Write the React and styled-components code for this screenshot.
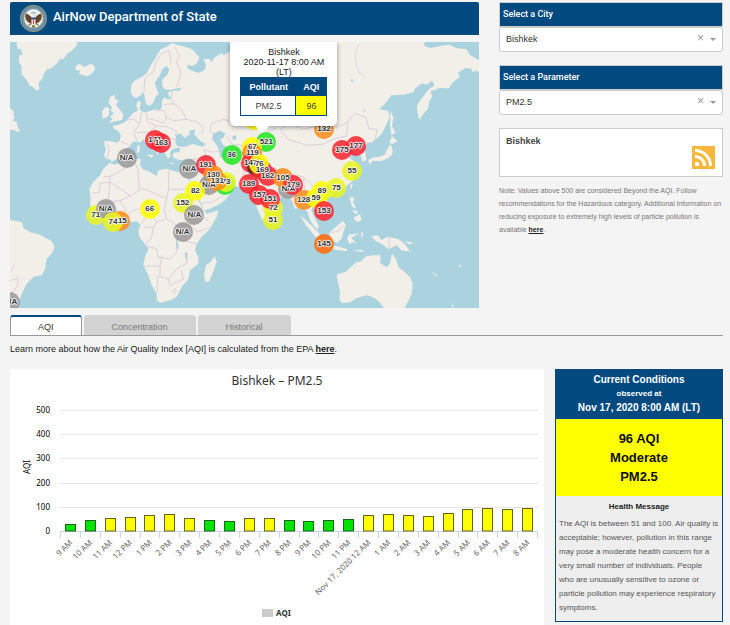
import React, { useState } from "react";
import styled, { createGlobalStyle } from "styled-components";

const NAVY = "#004a80";

const COLORS = {
  green: "#22e622",
  yellow: "#ffff00",
  lime: "#e8f520",
  orange: "#ff8c1a",
  deepOrange: "#ff6a0a",
  red: "#fc2430",
  grey: "#999999",
  dark: "#5a2a20",
};

// map drawing and pins share one 1407 x 798 coordinate space
const MAP_W = 1407;
const MAP_H = 798;

const land = [
  // Greenland, Iceland, Newfoundland
  "M20 0L22 20 33 22 38 38 28 40 26 60 35 72 34 95 50 115 60 132 70 136 80 146 88 141 86 122 98 108 100 98 112 80 120 82 140 65 150 50 160 52 172 35 184 27 202 8 200 0Z",
  "M196 75L205 66 216 70 222 76 240 66 250 68 256 80 248 92 232 103 216 98 206 96 212 86 198 84Z",
  "M0 200L10 206 13 228 8 236 20 240 24 258 31 266 24 270 12 264 0 264Z",
  // Eurasia
  "M500 8L486 3 470 14 452 22 442 38 430 58 418 78 410 94 395 105 376 115 365 125 362 150 368 163 378 168 392 160 400 150 404 165 408 185 418 192 430 182 436 165 446 155 440 140 434 122 448 102 458 80 470 72 478 82 472 98 458 112 456 128 462 140 478 144 495 140 514 137 510 146 490 146 474 151 478 165 488 170 472 172 462 166 456 178 456 195 450 204 435 202 420 207 405 211 394 208 388 198 394 182 384 176 379 190 384 206 370 212 360 224 350 236 338 244 326 248 308 252 312 260 324 266 332 278 330 295 322 302 300 298 284 297 283 310 288 320 282 340 288 350 298 352 306 360 316 352 330 352 342 340 344 325 358 314 366 302 378 297 390 302 400 292 412 304 422 314 432 322 442 336 447 338 443 326 450 330 448 320 432 310 424 298 417 286 424 282 436 294 452 306 460 318 466 335 474 350 482 342 480 330 488 322 498 318 512 318 508 330 490 333 488 345 500 352 515 355 530 350 546 350 550 358 545 375 540 388 532 396 545 425 560 455 575 490 582 505 600 500 625 488 645 475 660 455 670 445 662 435 645 430 638 420 630 430 618 422 610 405 600 395 612 398 625 412 645 425 665 430 700 437 712 450 722 455 735 475 742 500 755 530 762 540 770 530 772 510 785 490 805 470 820 462 835 465 845 475 855 500 864 498 870 478 878 500 892 508 900 534 910 550 924 564 926 550 912 524 904 504 910 490 925 512 936 524 958 506 962 490 950 474 945 459 970 449 1000 439 1025 419 1046 384 1036 360 1020 349 1012 336 1022 326 1040 329 1052 342 1058 359 1070 354 1066 332 1060 314 1074 302 1090 299 1116 274 1128 250 1140 224 1134 206 1108 202 1124 186 1145 160 1180 158 1212 150 1214 140 1236 124 1252 128 1262 118 1270 119 1272 132 1256 142 1230 176 1221 190 1222 209 1228 234 1236 222 1255 199 1257 180 1266 164 1262 148 1290 138 1316 139 1330 120 1350 104 1344 92 1366 78 1384 80 1388 90 1400 86 1407 90 1407 54 1380 40 1370 22 1340 19 1318 8 1290 12 1262 18 1243 12 1243 0 705 0 700 22 660 28 640 40 636 32 615 46 602 62 600 50 580 52 588 68 584 84 566 92 550 88 534 80 530 68 548 72 562 62 568 46 546 22 524 14Z",
  // Britain and Ireland
  "M300 165L316 158 314 172 326 174 318 188 330 204 340 218 336 234 318 238 296 242 308 230 300 224 312 214 302 206 306 196 296 184Z",
  "M286 194L298 198 296 222 278 230 276 208Z",
  // Africa and Madagascar
  "M300 362L315 368 340 355 380 350 393 352 390 368 398 382 420 390 440 402 446 384 470 380 500 390 525 388 534 400 536 412 550 436 560 465 575 495 590 515 625 505 620 525 600 560 575 585 560 605 555 625 565 645 565 665 540 685 535 712 515 735 500 765 480 775 450 782 440 775 440 755 425 730 415 700 400 670 405 645 415 620 400 600 388 585 385 565 392 550 380 538 365 540 345 525 320 530 290 535 270 525 250 510 240 490 242 470 238 440 250 420 270 400 280 380Z",
  "M614 642L620 660 610 688 598 718 586 720 582 700 588 670 602 660Z",
  // South America
  "M0 533L20 538 36 541 40 558 60 570 90 578 125 598 134 615 125 635 110 650 105 680 95 700 70 705 50 725 40 745 30 770 14 798 0 798Z",
  // Mediterranean islands
  "M382 312L390 308 388 330 380 334ZM410 338L430 338 426 348ZM474 362L492 363 488 367ZM524 362L536 358 530 368Z",
  // Japan, Sakhalin, Taiwan
  "M1148 324L1142 306 1132 322 1124 338 1108 344 1092 346 1074 354 1080 368 1088 356 1110 358 1132 350 1146 338ZM1138 302L1146 282 1162 298 1148 306ZM1142 204L1150 228 1146 252 1156 272 1144 280 1140 250ZM1020 430L1028 424 1024 444Z",
  // Philippines and Indonesia
  "M1018 466L1032 466 1030 482 1040 500 1026 494ZM1030 528L1050 516 1054 536 1040 540ZM1026 504L1044 508 1038 518ZM958 572L976 556 998 536 1008 548 1000 570 996 588 982 602 962 594ZM870 520L888 534 924 570 944 596 940 604 916 584 888 550ZM946 610L978 612 1012 622 1010 628 960 620ZM1016 578L1046 574 1024 588 1040 604 1028 600 1018 606 1012 592ZM1030 624L1062 624 1056 630ZM1052 568L1060 576 1056 590Z",
  "M1084 582L1104 580 1114 594 1134 584 1166 592 1184 606 1200 628 1176 626 1160 610 1136 622 1116 606 1098 598ZM1182 596L1208 602 1200 608Z",
  // Australia and Pacific islands
  "M980 702L984 696 1006 690 1022 676 1036 662 1054 658 1066 644 1086 640 1112 640 1110 662 1130 676 1140 664 1146 634 1158 652 1166 676 1184 690 1200 706 1208 724 1206 752 1194 780 1184 798 1122 798 1110 782 1094 768 1070 760 1040 768 1022 780 998 784 988 774 990 750Z",
  "M1268 690L1284 702 1282 704 1268 694ZM1344 670L1356 668 1350 676ZM1320 782L1334 794 1328 796Z",
];

const water = [
  "M496 302L498 280 512 274 524 288 540 276 536 268 556 262 552 276 572 298 588 306 578 314 548 306 520 316 502 312Z",
  "M610 276L628 266 646 274 640 288 630 292 640 310 652 316 658 342 644 352 630 344 628 326 618 306 606 292Z",
  "M666 284L676 278 680 292 670 294Z",
  "M498 594L504 600 506 622 500 618ZM524 628L530 634 532 652 526 648ZM516 566L526 562 526 574 516 576Z",
  "M1026 110L1030 124 1022 116ZM1058 204L1066 202 1064 210Z",
];

const river = "M1046 6L1036 34 1038 70 1048 92 1064 104";

const borders =
  "M402 150L404 110 430 90 438 60 454 34 478 26 M478 26L484 70 M494 14L508 40 500 60 512 90 508 112 500 136 M486 148L484 172 492 186 M460 188L480 186 492 186 M432 204L462 206 470 226 462 244 440 236 M440 236L410 228 M394 210L390 244 M390 244L370 232 352 234 M408 212L412 240 440 252 470 254 500 268 M390 244L372 270 380 296 M470 226L490 236 530 232 M492 186L512 200 530 232 560 240 580 256 576 276 M500 268L496 282 M440 252L420 270 380 272 M430 280L450 276 480 290 496 292 M462 300L488 312 M332 298L356 308 M292 306L298 320 292 348 M604 244L640 232 668 240 M604 244L600 268 612 276 M580 322L606 330 630 328 M582 324L590 348 548 352 M590 348L606 384 M650 352L688 350 700 390 696 436 M652 284L664 306 700 310 M608 398L560 372 548 380 M608 480L640 460 M572 484L606 480 M340 358L344 380 300 404 280 404 M300 404L300 420 362 462 388 444 M388 444L384 380 376 366 M388 444L400 440 470 470 M476 384L476 442 556 442 M476 442L470 470 462 506 470 530 M300 420L270 424 268 452 246 454 M300 420L294 480 262 480 M294 480L330 476 362 462 M330 476L350 510 M362 508L352 530 M388 500L366 506 M300 498L300 530 M320 500L322 528 M392 548L412 520 440 516 M416 470L424 516 440 540 470 530 M470 530L500 550 540 550 540 524 M400 556L430 556 440 540 M430 556L424 590 406 606 M500 550L500 590 560 606 M406 612L440 620 444 646 480 650 500 630 500 590 M402 672L450 672 456 640 M450 672L450 704 442 704 442 752 M450 704L476 712 500 680 530 664 532 632 M476 712L480 732 500 720 520 712 514 684 M540 550L562 570 600 556 M572 520L596 536 M488 748L494 740 500 748 492 754Z M810 262L840 246 880 262 920 252 960 262 996 250 1014 240 M810 262L834 292 890 310 940 306 980 288 1010 282 1014 240 M1014 240L1034 214 1068 226 1076 260 1102 262 1096 290 1084 308 M640 232L670 244 M774 268L800 258 M790 376L830 396 880 404 900 424 M700 390L740 380 780 400 M880 404L884 440 900 462 M900 424L920 442 946 450 M14 668L0 690 M0 716L22 708 24 730 4 756 M962 572L984 568 1000 550 M1136 584L1138 622 M738 300L770 320 M690 330L730 346";

const pins = [
  { x: 733, y: 235, label: "", color: "yellow" },
  { x: 435, y: 293, label: "171", color: "red" },
  { x: 454, y: 303, label: "163", color: "red" },
  { x: 350, y: 348, label: "N/A", color: "grey" },
  { x: 665, y: 338, label: "36", color: "green" },
  { x: 538, y: 380, label: "N/A", color: "grey" },
  { x: 587, y: 370, label: "191", color: "red" },
  { x: 610, y: 398, label: "130", color: "orange" },
  { x: 597, y: 430, label: "N/A", color: "grey" },
  { x: 645, y: 430, label: "", color: "green" },
  { x: 648, y: 421, label: "73", color: "lime" },
  { x: 622, y: 418, label: "131", color: "orange" },
  { x: 556, y: 446, label: "82", color: "yellow" },
  { x: 518, y: 482, label: "152", color: "lime" },
  { x: 553, y: 520, label: "N/A", color: "grey" },
  { x: 518, y: 569, label: "N/A", color: "grey" },
  { x: 419, y: 502, label: "66", color: "yellow" },
  { x: 257, y: 518, label: "71", color: "lime" },
  { x: 287, y: 500, label: "N/A", color: "grey" },
  { x: 331, y: 538, label: "115", color: "orange" },
  { x: 309, y: 541, label: "74", color: "lime" },
  { x: 1, y: 779, label: "N/A", color: "grey" },
  { x: 942, y: 262, label: "132", color: "orange" },
  { x: 996, y: 324, label: "175", color: "red" },
  { x: 1038, y: 311, label: "177", color: "red" },
  { x: 769, y: 299, label: "521", color: "green" },
  { x: 727, y: 315, label: "67", color: "yellow" },
  { x: 727, y: 334, label: "119", color: "orange" },
  { x: 722, y: 364, label: "147", color: "red" },
  { x: 740, y: 374, label: "", color: "dark" },
  { x: 757, y: 385, label: "169", color: "red" },
  { x: 748, y: 366, label: "76", color: "yellow" },
  { x: 773, y: 402, label: "162", color: "red" },
  { x: 835, y: 440, label: "N/A", color: "grey" },
  { x: 819, y: 407, label: "105", color: "orange" },
  { x: 850, y: 430, label: "179", color: "red" },
  { x: 716, y: 425, label: "189", color: "red" },
  { x: 789, y: 533, label: "51", color: "lime" },
  { x: 790, y: 497, label: "72", color: "lime" },
  { x: 780, y: 470, label: "151", color: "red" },
  { x: 748, y: 460, label: "157", color: "red" },
  { x: 881, y: 475, label: "128", color: "orange" },
  { x: 918, y: 468, label: "59", color: "yellow" },
  { x: 936, y: 448, label: "89", color: "yellow" },
  { x: 979, y: 437, label: "75", color: "lime" },
  { x: 1026, y: 387, label: "55", color: "lime" },
  { x: 942, y: 508, label: "153", color: "red" },
  { x: 942, y: 607, label: "145", color: "deepOrange" },
];

const readings = [
  ["9 AM", 28], ["10 AM", 47], ["11 AM", 53], ["12 PM", 57], ["1 PM", 66],
  ["2 PM", 70], ["3 PM", 53], ["4 PM", 45], ["5 PM", 41], ["6 PM", 53],
  ["7 PM", 53], ["8 PM", 47], ["9 PM", 41], ["10 PM", 45], ["11 PM", 49],
  ["Nov 17, 2020 12 AM", 65], ["1 AM", 72], ["2 AM", 66], ["3 AM", 64],
  ["4 AM", 73], ["5 AM", 89], ["6 AM", 94], ["7 AM", 91], ["8 AM", 96],
];

const Seal = () => (
  <svg width="27" height="27" viewBox="0 0 54 54" aria-hidden="true">
    <circle cx="27" cy="27" r="27" fill="#9c9a6c" />
    <circle cx="27" cy="27" r="25" fill="#5f88b0" />
    <circle cx="27" cy="27" r="21" fill="none" stroke="#9fb6c8" strokeWidth="2" strokeDasharray="2 2" />
    <circle cx="27" cy="27" r="19" fill="#f4f3ea" stroke="#b9ad7a" strokeWidth="1" />
    <path d="M20 17c2-5 12-5 14 0z" fill="#9fc0dc" />
    <path d="M24 25c-4-2-6-7-12-8-3 4-2 14 5 18l5 3zM30 25c4-2 6-7 12-8 3 4 2 14-5 18l-5 3z" fill="#6d4a2c" />
    <path d="M16 20l5 12M38 20l-5 12" stroke="#3d2a1c" strokeWidth="1.5" />
    <path d="M24 25c0-5 1-7 4-7 2 0 3 1 4 3l-3 0 1 5z" fill="#fff" stroke="#8b8b80" strokeWidth=".6" />
    <path d="M22 25h10v9c0 3-3 5-5 6-2-1-5-3-5-6z" fill="#fff" />
    <path d="M22 25h10v4H22z" fill="#2b4a86" />
    <path d="M23.500 29v8M27 29v10M30.500 29v8" stroke="#c33038" strokeWidth="1.600" />
    <path d="M23 38l-7 3M31 38l7 3M27 40l-3 4h6z" stroke="#6d7a3c" strokeWidth="2" fill="#6d4a2c" />
  </svg>
);

const RssIcon = () => (
  <svg width="23" height="23" viewBox="0 0 23 23" aria-hidden="true">
    <rect width="23" height="23" fill="#f5b83d" />
    <circle cx="5" cy="18" r="2.300" fill="#fff" />
    <path d="M3 10.500a9.500 9.500 0 0 1 9.500 9.500M3 4.500A15.500 15.500 0 0 1 18.500 20" fill="none" stroke="#fff" strokeWidth="3" />
  </svg>
);

const WorldMap = () => (
  <MapSvg viewBox={`0 0 ${MAP_W} ${MAP_H}`} aria-hidden="true">
    <g fill="#f2efe9">
      {land.map((d) => (
        <path key={d} d={d} />
      ))}
    </g>
    <path d={borders} fill="none" stroke="#ddcedb" strokeWidth="3" strokeLinejoin="round" />
    <g fill="#aad3df">
      {water.map((d) => (
        <path key={d} d={d} />
      ))}
    </g>
    <path d={river} fill="none" stroke="#c9dfe3" strokeWidth="3" />
  </MapSvg>
);

const AqiChart = () => {
  const left = 50;
  const zero = 162;
  const step = 477 / readings.length;
  const scale = 121 / 500;

  return (
    <ChartSvg viewBox="0 0 534 256" role="img" aria-label="Bishkek PM2.5 hourly AQI">
      <ChartTitle x="267" y="16">Bishkek – PM2.5</ChartTitle>
      {[500, 400, 300, 200, 100, 0].map((value) => {
        const y = Math.round(zero - value * scale);
        return (
          <g key={value}>
            <rect x={left} y={y} width="478" height="1" fill={value ? "#e6e6e6" : "#ccd6eb"} />
            <AxisValue x="40" y={y + 3}>{value}</AxisValue>
          </g>
        );
      })}
      <AxisTitle transform="translate(20 98) rotate(-90)">AQI</AxisTitle>
      {readings.map(([hour, value], i) => {
        const center = left + step * (i + 0.5);
        const x = Math.round(center - 5) + 0.5;
        const top = Math.round(zero - value * scale) + 0.5;
        return (
          <g key={hour + i}>
            <rect x={Math.round(left + step * i)} y={zero} width="1" height="7" fill="#ccd6eb" />
            <rect
              x={x}
              y={top}
              width="10"
              height={zero - top}
              fill={value > 50 ? "#ffff00" : "#00e400"}
              stroke={value > 50 ? "#66661c" : "#1c661c"}
            />
            <HourLabel transform={`translate(${center + 3} 174) rotate(-45)`}>{hour}</HourLabel>
          </g>
        );
      })}
      <rect x="527" y={zero} width="1" height="7" fill="#ccd6eb" />
      <rect x="252" y="240" width="11" height="8" fill="#cccccc" />
      <LegendText x="266" y="247">AQI</LegendText>
    </ChartSvg>
  );
};

const Picker = ({ id, title, options }) => {
  const [value, setValue] = useState(options[0]);

  return (
    <PickerBox>
      <PickerLabel htmlFor={id}>{title}</PickerLabel>
      <PickerField>
        <PickerSelect id={id} value={value} onChange={(e) => setValue(e.target.value)}>
          <option value=""></option>
          {options.map((option) => (
            <option key={option}>{option}</option>
          ))}
        </PickerSelect>
        <ClearButton type="button" aria-label={`Clear ${title}`} onClick={() => setValue("")}>
          ×
        </ClearButton>
        <Caret />
      </PickerField>
    </PickerBox>
  );
};

const tabs = ["AQI", "Concentration", "Historical"];

const App = () => {
  const [activeTab, setActiveTab] = useState("AQI");

  return (
    <Page>
      <GlobalStyle />
      <TopGrid>
        <div>
          <Header>
            <Seal />
            <Title>AirNow Department of State</Title>
          </Header>
          <MapBox>
            <WorldMap />
            {pins.map((pin, i) => (
              <Pin key={i} $x={pin.x} $y={pin.y} $color={COLORS[pin.color]} />
            ))}
            {/* labels go over every circle so crowded pins stay readable */}
            {pins.map((pin, i) => (
              <PinLabel key={i} $x={pin.x} $y={pin.y}>
                {pin.label}
              </PinLabel>
            ))}
            <Popup>
              <div>Bishkek</div>
              <div>2020-11-17 8:00 AM (LT)</div>
              <PopupTable>
                <thead>
                  <tr>
                    <th>Pollutant</th>
                    <th>AQI</th>
                  </tr>
                </thead>
                <tbody>
                  <tr>
                    <td>PM2.5</td>
                    <AqiCell>96</AqiCell>
                  </tr>
                </tbody>
              </PopupTable>
            </Popup>
          </MapBox>
        </div>
        <Sidebar>
          <Picker id="city" title="Select a City" options={["Bishkek"]} />
          <Picker id="parameter" title="Select a Parameter" options={["PM2.5"]} />
          <FeedBox>
            <FeedCity>Bishkek</FeedCity>
            <FeedLink href="#rss" aria-label="RSS feed">
              <RssIcon />
            </FeedLink>
          </FeedBox>
          <Note>
            Note: Values above 500 are considered Beyond the AQI. Follow recommendations for the
            Hazardous category. Additional information on reducing exposure to extremely high levels
            of particle pollution is available <HereLink href="#exposure">here</HereLink>.
          </Note>
        </Sidebar>
      </TopGrid>

      <Tabs role="tablist">
        {tabs.map((tab) => (
          <Tab
            key={tab}
            type="button"
            role="tab"
            aria-selected={activeTab === tab}
            $active={activeTab === tab}
            onClick={() => setActiveTab(tab)}
          >
            {tab}
          </Tab>
        ))}
      </Tabs>
      <Learn>
        Learn more about how the Air Quality Index [AQI] is calculated from the EPA{" "}
        <HereLink href="#epa">here</HereLink>.
      </Learn>

      <BottomGrid>
        <ChartPanel>
          <AqiChart />
        </ChartPanel>
        <Conditions>
          <ConditionsHead>
            <div>Current Conditions</div>
            <Observed>observed at</Observed>
            <div>Nov 17, 2020 8:00 AM (LT)</div>
          </ConditionsHead>
          <Level>
            <div>96 AQI</div>
            <div>Moderate</div>
            <div>PM2.5</div>
          </Level>
          <Health>
            <HealthTitle>Health Message</HealthTitle>
            <HealthText>
              The AQI is between 51 and 100. Air quality is acceptable; however, pollution in this
              range may pose a moderate health concern for a very small number of individuals.
              People who are unusually sensitive to ozone or particle pollution may experience
              respiratory symptoms.
            </HealthText>
          </Health>
        </Conditions>
      </BottomGrid>
    </Page>
  );
};

const GlobalStyle = createGlobalStyle`
  * {
    box-sizing: border-box;
  }
  body {
    margin: 0;
    background: #f4f4f4;
    color: #222;
    font-family: "Liberation Sans", Arial, sans-serif;
    font-size: 9px;
  }
  button, select {
    font: inherit;
  }
`;

const Page = styled.div`
  padding: 2px 7px 0 10px;
`;

const TopGrid = styled.div`
  display: grid;
  grid-template-columns: 1fr 224px;
  gap: 20px;
`;

const Header = styled.header`
  display: flex;
  align-items: center;
  gap: 6px;
  height: 33px;
  padding-left: 10px;
  margin-bottom: 7px;
  background: ${NAVY};
  border-radius: 2px 2px 0 0;
`;

const Title = styled.h1`
  margin: 0 0 4px;
  color: #fff;
  font-family: Roboto, "Liberation Sans", sans-serif;
  font-size: 13px;
  font-weight: 500;
`;

const MapBox = styled.div`
  position: relative;
  aspect-ratio: 469 / 266;
  overflow: hidden;
  background: #aad3df;
`;

const MapSvg = styled.svg`
  display: block;
  width: 100%;
  height: 100%;
`;

const Pin = styled.div`
  position: absolute;
  left: ${(p) => (p.$x / MAP_W) * 100}%;
  top: ${(p) => (p.$y / MAP_H) * 100}%;
  width: 20px;
  height: 20px;
  margin: -10px 0 0 -10px;
  border-radius: 50%;
  background: ${(p) => p.$color}dd;
`;

const PinLabel = styled(Pin)`
  background: none;
  color: #333;
  font-size: 8px;
  font-weight: bold;
  line-height: 19px;
  text-align: center;
  text-shadow: 1px 0 1px #fff, -1px 0 1px #fff, 0 1px 1px #fff, 0 -1px 1px #fff,
    0 0 2px #fff;
`;

const Popup = styled.div`
  position: absolute;
  top: 0;
  left: 47%;
  width: 107px;
  padding: 5px 10px 10px;
  background: #fff;
  border-radius: 0 0 5px 5px;
  box-shadow: 0 1px 5px rgba(0, 0, 0, 0.4);
  line-height: 10px;
  text-align: center;

  &::after {
    content: "";
    position: absolute;
    top: 100%;
    left: 25px;
    border: 7px solid transparent;
    border-top-color: #fff;
    border-bottom: 0;
  }
`;

const PopupTable = styled.table`
  width: 100%;
  border-collapse: collapse;
  border: 1px solid ${NAVY};

  th {
    height: 18px;
    padding: 0;
    background: ${NAVY};
    color: #fff;
  }
  td {
    height: 20px;
    padding: 0;
    border: 1px solid ${NAVY};
    color: #444;
  }
`;

const AqiCell = styled.td`
  width: 31px;
  background: #ffff00;
`;

const Sidebar = styled.aside`
  display: flex;
  flex-direction: column;
  gap: 13px;
`;

const PickerBox = styled.div`
  display: flex;
  flex-direction: column;
`;

const PickerLabel = styled.label`
  height: 25px;
  padding-left: 3px;
  border: 1px solid #ccc;
  background: ${NAVY};
  color: #fff;
  font-family: Roboto, "Liberation Sans", sans-serif;
  font-weight: 500;
  line-height: 23px;
`;

const PickerField = styled.div`
  display: flex;
  align-items: center;
  height: 25px;
  padding: 0 6px;
  border: 1px solid #ccc;
  border-radius: 3px;
  background: #fff;
`;

const PickerSelect = styled.select`
  flex: 1;
  appearance: none;
  padding: 0 0 2px;
  border: 0;
  background: none;
  color: #333;
`;

const ClearButton = styled.button`
  margin-right: 6px;
  padding: 0 0 3px;
  border: 0;
  background: none;
  color: #999;
  font-size: 12px;
  line-height: 12px;
`;

const Caret = styled.span`
  border: 3px solid transparent;
  border-top-color: #999;
  border-bottom: 0;
`;

const FeedBox = styled.div`
  display: flex;
  justify-content: space-between;
  height: 49px;
  padding: 7px 7px 7px 6px;
  border: 1px solid #ccc;
  background: #fff;
`;

const FeedCity = styled.strong`
  color: #444;
`;

const FeedLink = styled.a`
  align-self: flex-end;
  height: 23px;
`;

const Note = styled.p`
  margin: -6px 0 0;
  color: #777;
  font-size: 7px;
  line-height: 13px;
`;

const HereLink = styled.a`
  color: #222;
  font-weight: bold;
  text-decoration: underline;
`;

const Tabs = styled.div`
  display: flex;
  gap: 2px;
  margin-top: 7px;
  border-bottom: 1px solid #999;
`;

const Tab = styled.button`
  height: 20px;
  padding: 2px 27px 0;
  border: 1px solid ${(p) => (p.$active ? "#999" : "#d3d3d3")};
  border-top: 2px solid ${(p) => (p.$active ? NAVY : "#d3d3d3")};
  border-bottom: 0;
  border-radius: 3px 3px 0 0;
  background: ${(p) => (p.$active ? "#fff" : "#d3d3d3")};
  color: ${(p) => (p.$active ? "#333" : "#777")};
`;

const Learn = styled.p`
  margin: 8px 0 14px;
  line-height: 11px;
`;

const BottomGrid = styled.div`
  display: grid;
  grid-template-columns: 1fr 168px;
  gap: 11px;
  align-items: start;
`;

const ChartPanel = styled.section`
  background: #fff;
`;

const ChartSvg = styled.svg`
  display: block;
  width: 100%;
  font-family: "Noto Sans", sans-serif;
`;

const ChartTitle = styled.text`
  fill: #333;
  font-size: 12px;
  text-anchor: middle;
`;

const AxisValue = styled.text`
  fill: #000;
  font-size: 8px;
  text-anchor: end;
`;

const AxisTitle = styled.text`
  fill: #000;
  font-size: 8px;
  text-anchor: middle;
`;

const HourLabel = styled.text`
  fill: #666;
  font-size: 8px;
  text-anchor: end;
`;

const LegendText = styled.text`
  fill: #333;
  font-size: 8px;
  font-weight: bold;
`;

const Conditions = styled.section`
  border: 1px solid ${NAVY};
  background: #eee;
`;

const ConditionsHead = styled.div`
  padding: 3px 0 4px;
  background: ${NAVY};
  color: #fff;
  font-size: 10px;
  font-weight: bold;
  line-height: 14px;
  text-align: center;
`;

const Observed = styled.div`
  font-size: 8px;
`;

const Level = styled.div`
  padding: 10px 0;
  background: #ffff00;
  color: #111;
  font-size: 13px;
  font-weight: bold;
  line-height: 19px;
  text-align: center;
`;

const Health = styled.div`
  padding: 4px 3px 6px;
`;

const HealthTitle = styled.h2`
  margin: 0;
  font-size: 8px;
  line-height: 14px;
  text-align: center;
`;

const HealthText = styled.p`
  margin: 3px 0 0;
  color: #555;
  font-size: 8px;
  line-height: 14px;
`;

export default App;
